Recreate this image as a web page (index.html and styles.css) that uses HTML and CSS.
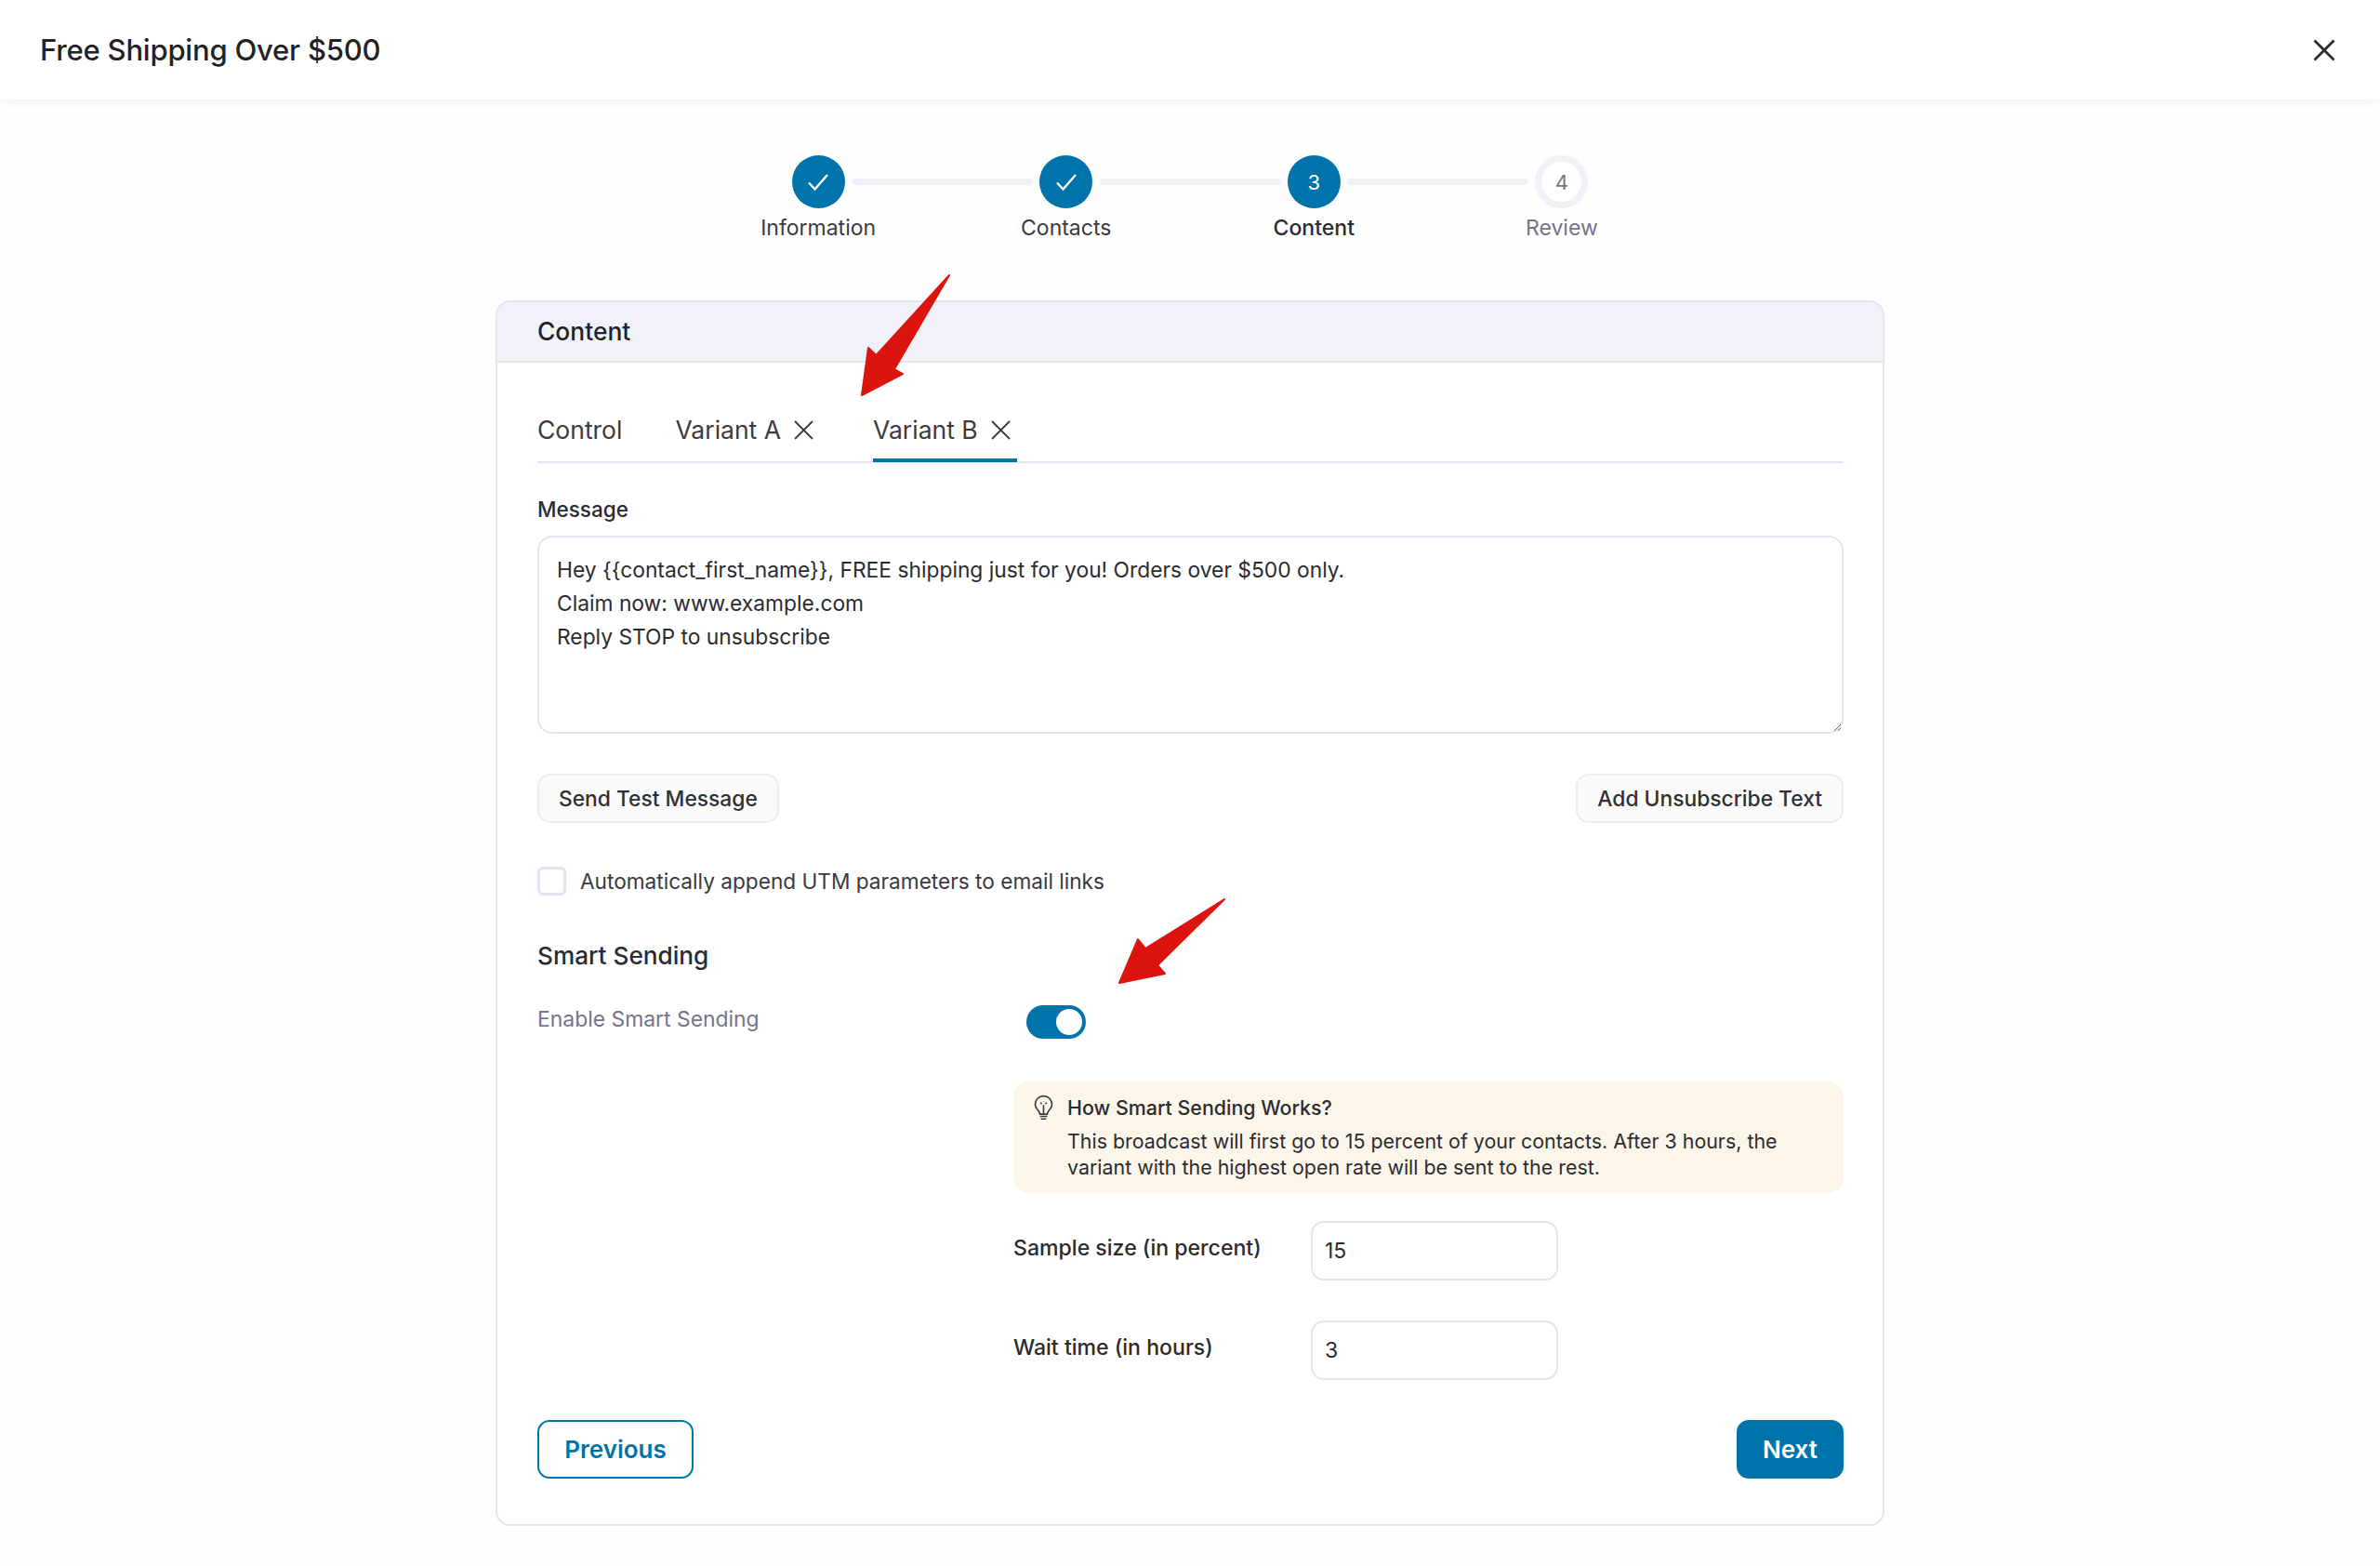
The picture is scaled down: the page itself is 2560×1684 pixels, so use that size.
FILE: index.html
```html
<!DOCTYPE html>
<html lang="en">
<head>
<meta charset="utf-8">
<title>Free Shipping Over $500</title>
<link rel="stylesheet" href="styles.css">
</head>
<body>
<header class="topbar">
  <h1 class="topbar-title">Free Shipping Over $500</h1>
  <svg class="topbar-close" viewBox="0 0 24 24"><path d="M1.5 1.5 22.500 22.500M22.500 1.500 1.500 22.500"/></svg>
</header>
<main class="page">
  <ol class="stepper">
    <li class="step step-done">
      <span class="step-dot"><svg class="step-check" viewBox="0 0 24 20"><path d="M2 10.500 8.500 17.500 22 2"/></svg></span>
      <span class="step-label">Information</span>
    </li>
    <li class="step step-done">
      <span class="step-dot"><svg class="step-check" viewBox="0 0 24 20"><path d="M2 10.500 8.500 17.500 22 2"/></svg></span>
      <span class="step-label">Contacts</span>
    </li>
    <li class="step step-current">
      <span class="step-dot">3</span>
      <span class="step-label">Content</span>
    </li>
    <li class="step step-todo">
      <span class="step-dot">4</span>
      <span class="step-label">Review</span>
    </li>
  </ol>

  <section class="card">
    <h2 class="card-head">Content</h2>
    <div class="card-body">
      <nav class="tabs">
        <span class="tab">Control</span>
        <span class="tab">Variant A <svg class="tab-x" viewBox="0 0 21 21"><path d="M1 1 20 20M20 1 1 20"/></svg></span>
        <span class="tab tab-active">Variant B <svg class="tab-x" viewBox="0 0 21 21"><path d="M1 1 20 20M20 1 1 20"/></svg></span>
      </nav>

      <label class="field-label" for="msg">Message</label>
      <textarea class="message" id="msg">Hey {{contact_first_name}}, FREE shipping just for you! Orders over $500 only.
Claim now: www.example.com
Reply STOP to unsubscribe</textarea>

      <div class="actions">
        <button class="btn-soft">Send Test Message</button>
        <button class="btn-soft">Add Unsubscribe Text</button>
      </div>

      <label class="check-row">
        <span class="checkbox"></span>
        <span>Automatically append UTM parameters to email links</span>
      </label>

      <h3 class="section-title">Smart Sending</h3>
      <div class="toggle-row">
        <span class="toggle-label">Enable Smart Sending</span>
        <span class="toggle"><span class="toggle-knob"></span></span>
      </div>

      <div class="notice">
        <svg class="notice-icon" viewBox="0 0 22 28">
          <path d="M7 21.500C7 17.500 1.500 16 1.500 10.500a9.500 9.500 0 0 1 19 0C20.500 16 15 17.500 15 21.500Z"/>
          <path d="M7 24h8M8 26.800h6"/>
          <path d="M11 21V11M7.500 8.500 9 10M14.500 8.500 13 10M11 7v.5"/>
        </svg>
        <div class="notice-text">
          <div class="notice-title">How Smart Sending Works?</div>
          <div>This broadcast will first go to 15 percent of your contacts. After 3 hours, the variant with the highest open rate will be sent to the rest.</div>
        </div>
      </div>

      <div class="setting">
        <span class="setting-label">Sample size (in percent)</span>
        <input class="setting-input" value="15">
      </div>
      <div class="setting setting-next">
        <span class="setting-label">Wait time (in hours)</span>
        <input class="setting-input" value="3">
      </div>

      <div class="footer">
        <button class="btn-outline">Previous</button>
        <button class="btn-solid">Next</button>
      </div>
    </div>
  </section>
</main>
<svg class="annotations" viewBox="0 0 2560 1684">
  <path d="M1021 296 942.500 382 934 374 927 425 971 402 962 397Z"/>
  <path d="M1317 967 1232 1020 1224 1010 1204 1057 1253 1047 1245 1038Z"/>
</svg>
</body>
</html>
```
FILE: styles.css
```css
* { box-sizing: border-box; }
html, body { margin: 0; padding: 0; }
body {
  position: relative;
  width: 2560px;
  height: 1684px;
  overflow: hidden;
  background: #fefefe;
  color: #2b2b30;
  font-family: Inter, "Liberation Sans", sans-serif;
  font-size: 23px;
}
.topbar {
  height: 107px;
  padding: 0 48px 0 43px;
  display: flex;
  align-items: center;
  justify-content: space-between;
  background: #fff;
  box-shadow: 0 2px 8px rgba(30, 30, 60, 0.07);
}
.topbar-title { margin: 0; font-size: 31px; letter-spacing: -0.2px; font-weight: 500; color: #222226; }
.topbar-close { width: 24px; height: 24px; fill: none; stroke: #2b2b30; stroke-width: 2.800; }

.page { display: flex; flex-direction: column; align-items: center; }

.stepper {
  list-style: none;
  margin: 60px 0 0;
  padding: 0;
  display: grid;
  grid-template-columns: repeat(4, 266.600px);
}
.step { position: relative; display: flex; flex-direction: column; align-items: center; }
.step:not(:last-child)::after {
  content: "";
  position: absolute;
  top: 25px;
  left: calc(50% + 36px);
  width: 195px;
  height: 7px;
  border-radius: 4px;
  background: #f0f1f9;
}
.step-dot {
  width: 57px;
  height: 57px;
  border-radius: 50%;
  display: flex;
  align-items: center;
  justify-content: center;
  font-size: 22px;
  background: #0073aa;
  color: #fff;
}
.step-check { width: 24px; height: 20px; fill: none; stroke: #fff; stroke-width: 2.400; }
.step-label { margin-top: 5px; line-height: 32px; font-size: 23px; color: #3a3a40; }
.step-current .step-label { font-weight: 500; color: #2b2b30; }
.step-todo .step-dot { background: #fff; border: 7px solid #f0f1f9; color: #75758a; }
.step-todo .step-label { color: #75758a; }

.card {
  width: 1494px;
  height: 1318px;
  margin-top: 62px;
  border: 2px solid #e4e4f0;
  border-radius: 16px;
  overflow: hidden;
  background: #fff;
}
.card-head {
  margin: 0;
  height: 65px;
  padding: 0 43px 1px;
  display: flex;
  align-items: center;
  background: #f0f1f9;
  border-bottom: 2px solid #e4e4f0;
  font-size: 26.400px;
  font-weight: 500;
  color: #222226;
}
.card-body { padding: 0 42px 0 43px; }

.tabs {
  display: flex;
  gap: 57px;
  margin-top: 54px;
  border-bottom: 2px solid #e4e4f0;
}
.tab {
  display: flex;
  align-items: center;
  gap: 14px;
  height: 52px;
  padding: 0 7px 16px 0;
  line-height: 36px;
  font-size: 26.500px;
  color: #3a3a40;
}
.tab:first-child { padding-right: 0; }
.tab-active { height: 53px; margin-bottom: -1px; border-bottom: 4px solid #0073aa; padding-bottom: 13px; }
.tab-x { width: 21px; height: 21px; fill: none; stroke: #3a3a40; stroke-width: 1.800; }

.field-label {
  display: block;
  margin-top: 34px;
  line-height: 32px;
  font-size: 22.500px;
  font-weight: 500;
  color: #2b2b30;
}
.message {
  display: block;
  width: 100%;
  height: 213px;
  margin-top: 12px;
  padding: 17px 19px 15px;
  border: 2px solid #e4e4f0;
  border-radius: 16px;
  outline: none;
  background: #fff;
  color: #2b2b30;
  font-family: Inter, "Liberation Sans", sans-serif;
  font-size: 22.800px;
  line-height: 35.800px;
}
.actions { display: flex; justify-content: space-between; margin-top: 43px; }
.btn-soft {
  height: 53px;
  padding: 0 21px;
  border: 2px solid #ececf1;
  border-radius: 14px;
  background: #fafafa;
  color: #2f2f35;
  font-family: Inter, "Liberation Sans", sans-serif;
  font-size: 22.800px;
  font-weight: 500;
}
.check-row {
  display: flex;
  align-items: center;
  gap: 15px;
  height: 31px;
  margin-top: 47px;
  font-size: 22.650px;
  color: #3a3a40;
}
.checkbox {
  width: 31px;
  height: 31px;
  border: 3px solid #e4e4f0;
  border-radius: 6px;
  background: #fff;
}
.section-title {
  margin: 47px 0 0;
  line-height: 36px;
  font-size: 26.200px;
  font-weight: 500;
  color: #2b2b30;
}
.toggle-row { display: flex; margin-top: 35px; height: 36px; }
.toggle-label { width: 526px; line-height: 31px; font-size: 22.900px; color: #75758a; }
.toggle {
  width: 64px;
  height: 36px;
  padding: 4px;
  border-radius: 18px;
  display: flex;
  justify-content: flex-end;
  background: #0073aa;
}
.toggle-knob { width: 28px; height: 28px; border-radius: 50%; background: #fff; }

.notice {
  display: flex;
  gap: 15px;
  height: 120px;
  margin: 46px 0 0 512px;
  padding: 14px 40px 14px 22px;
  border-radius: 16px;
  background: #fcf6ea;
  font-size: 21.400px;
  line-height: 28px;
  color: #2b2b30;
}
.notice-icon {
  flex: none;
  width: 21px;
  height: 28px;
  fill: none;
  stroke: #3a3a40;
  stroke-width: 1.700;
}
.notice-title { margin-bottom: 8px; font-weight: 500; }

.setting { display: flex; align-items: flex-start; margin: 30px 0 0 512px; }
.setting-next { margin-top: 43px; }
.setting-label {
  width: 320px;
  margin-top: 13px;
  line-height: 32px;
  font-size: 23.100px;
  font-weight: 500;
  color: #2b2b30;
}
.setting-input {
  width: 266px;
  height: 64px;
  padding: 0 13px;
  border: 2px solid #e4e4f0;
  border-radius: 14px;
  outline: none;
  background: #fff;
  color: #2b2b30;
  font-family: Inter, "Liberation Sans", sans-serif;
  font-size: 23px;
}
.footer { display: flex; justify-content: space-between; margin-top: 43px; }
.btn-outline, .btn-solid {
  height: 63px;
  border-radius: 13px;
  font-family: Inter, "Liberation Sans", sans-serif;
  font-size: 26px;
  font-weight: 600;
}
.btn-outline { width: 168px; border: 2px solid #0073aa; background: #fff; color: #0073aa; }
.btn-solid { width: 115px; border: 2px solid #0073aa; background: #0073aa; color: #fff; }

.annotations {
  position: absolute;
  left: 0;
  top: 0;
  width: 2560px;
  height: 1684px;
  fill: #dc1410;
  stroke: #dc1410;
  stroke-width: 2;
  stroke-linejoin: round;
  pointer-events: none;
}
```
